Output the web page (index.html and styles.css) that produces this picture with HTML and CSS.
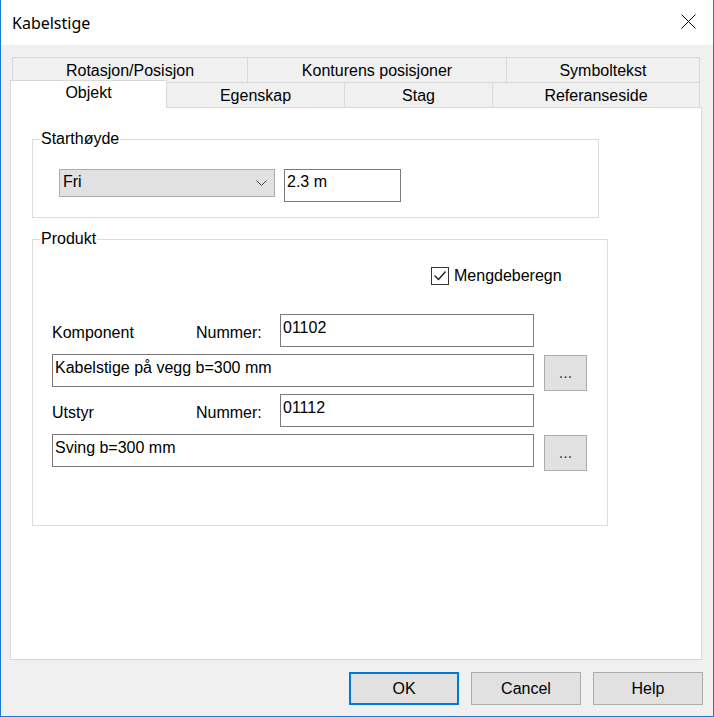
FILE: index.html
```html
<!DOCTYPE html>
<html lang="no">
<head>
<meta charset="utf-8">
<title>Kabelstige</title>
<link rel="stylesheet" href="styles.css">
</head>
<body>
<div class="window">
  <div class="titlebar">
    <span class="title">Kabelstige</span>
    <svg class="close" width="15" height="15" viewBox="0 0 15 15"><path d="M0.5 0.5 L14.5 14.5 M14.5 0.5 L0.5 14.5" stroke="#000" stroke-width="1" fill="none"/></svg>
  </div>
  <div class="client">
    <div class="tabs">
      <div class="tabrow row1">
        <div class="tab t-rot">Rotasjon/Posisjon</div>
        <div class="tab t-kon">Konturens posisjoner</div>
        <div class="tab t-sym last">Symboltekst</div>
      </div>
      <div class="tabrow row2">
        <div class="tab t-obj active">Objekt</div>
        <div class="tab t-egn">Egenskap</div>
        <div class="tab t-stag">Stag</div>
        <div class="tab t-ref last">Referanseside</div>
      </div>
    </div>
    <div class="panel">
      <fieldset class="group g-start">
        <legend>Starthøyde</legend>
        <div class="start-row">
          <div class="combo"><span>Fri</span><svg class="chev" width="11" height="6" viewBox="0 0 11 6"><polyline points="0.5,0.5 5.5,5.5 10.5,0.5" fill="none" stroke="#444" stroke-width="1"/></svg></div>
          <div class="field f-height">2.3 m</div>
        </div>
      </fieldset>
      <fieldset class="group g-prod">
        <legend>Produkt</legend>
        <div class="prod-body">
          <div class="check">
            <svg class="box" width="18" height="18" viewBox="0 0 18 18"><rect x="0.5" y="0.5" width="17" height="17" fill="#fff" stroke="#333" stroke-width="1"/><polyline points="3.5,8.5 7.5,12.5 14.5,4.5" fill="none" stroke="#1a1a1a" stroke-width="1.3"/></svg>
            <span>Mengdeberegn</span>
          </div>
          <div class="prod-grid">
            <span class="lbl">Komponent</span>
            <span class="lbl">Nummer:</span>
            <div class="field">01102</div>
            <div class="field long">Kabelstige på vegg b=300 mm</div>
            <div class="dots">...</div>
            <span class="lbl">Utstyr</span>
            <span class="lbl">Nummer:</span>
            <div class="field">01112</div>
            <div class="field long">Sving b=300 mm</div>
            <div class="dots">...</div>
          </div>
        </div>
      </fieldset>
    </div>
    <div class="buttons">
      <div class="push default">OK</div>
      <div class="push">Cancel</div>
      <div class="push">Help</div>
    </div>
  </div>
</div>
</body>
</html>
```
FILE: styles.css
```css
html, body {
  margin: 0;
  padding: 0;
  background: #f0f0f0;
}
body {
  font-family: "Liberation Sans", Arial, sans-serif;
  font-size: 16px;
  color: #000;
}
.window {
  width: 714px;
  height: 717px;
  box-sizing: border-box;
  border: 1px solid #1a7ad4;
  border-top: 0;
  background: #f0f0f0;
  display: flex;
  flex-direction: column;
}
.titlebar {
  height: 45px;
  flex: none;
  background: #fff;
  display: flex;
  justify-content: space-between;
  align-items: flex-start;
  padding: 0 17px 0 11px;
}
.title {
  font-family: "Noto Sans", sans-serif;
  font-size: 16px;
  line-height: 22px;
  margin-top: 12px;
}
.close {
  display: block;
  margin-top: 14px;
}
.client {
  flex: 1;
  padding: 12px 0 0 9px;
  display: flex;
  flex-direction: column;
}
.tabs {
  width: 692px;
}
.tabrow {
  display: flex;
  height: 25px;
}
.row1 {
  padding-left: 2px;
}
.row2 {
  align-items: flex-end;
}
.tab {
  box-sizing: border-box;
  height: 25px;
  border-top: 1px solid #d9d9d9;
  border-left: 1px solid #d9d9d9;
  background: #f0f0f0;
  text-align: center;
  line-height: 18px;
  padding-top: 4px;
  white-space: nowrap;
}
.tab.last {
  border-right: 1px solid #d9d9d9;
}
.t-rot { width: 235px; }
.t-kon { width: 259px; }
.t-sym { width: 194px; }
.t-obj { width: 157px; }
.t-egn { width: 177px; border-left: 0; }
.t-stag { width: 148px; }
.t-ref { width: 208px; }
.tab.active {
  height: 28px;
  margin-top: -2px;
  margin-bottom: -1px;
  border-right: 1px solid #d9d9d9;
  background: #fff;
  position: relative;
  z-index: 1;
  padding-top: 3px;
}
.panel {
  box-sizing: border-box;
  width: 692px;
  height: 553px;
  border: 1px solid #d9d9d9;
  background: #fff;
  padding: 22px 0 0 21px;
}
.group {
  margin: 0;
  border: 1px solid #dcdcdc;
  box-sizing: border-box;
  min-width: 0;
}
.group legend {
  padding: 0 1px;
  margin-left: 7px;
  line-height: 18px;
}
.g-start {
  width: 567px;
  padding: 21px 0 15px 0;
}
.start-row {
  display: flex;
  gap: 9px;
  align-items: flex-start;
  margin-left: 26px;
}
.combo {
  box-sizing: border-box;
  width: 216px;
  height: 28px;
  border: 1px solid #adadad;
  background: #e1e1e1;
  display: flex;
  justify-content: space-between;
  align-items: flex-start;
  padding: 3px 7px 0 3px;
  line-height: 18px;
}
.chev {
  display: block;
  margin-top: 7px;
}
.field {
  box-sizing: border-box;
  height: 33px;
  border: 1px solid #7a7a7a;
  background: #fff;
  padding: 4px 2px 0;
  line-height: 18px;
  white-space: nowrap;
}
.f-height {
  width: 117px;
  padding-top: 3px;
}
.g-prod {
  width: 576px;
  margin-top: 12px;
  padding: 19px 0 58px 0;
}
.prod-body {
  margin-left: 19px;
}
.check {
  display: flex;
  align-items: center;
  gap: 5px;
  margin-left: 379px;
  height: 18px;
  line-height: 18px;
}
.box {
  display: block;
}
.prod-grid {
  display: grid;
  grid-template-columns: 144px 84px 254px 10px 43px;
  grid-template-rows: repeat(4, 33px);
  row-gap: 7px;
  margin-top: 29px;
}
.lbl {
  align-self: start;
  padding-top: 10px;
  line-height: 18px;
}
.long {
  grid-column: 1 / 4;
}
.dots {
  grid-column: 5;
  align-self: start;
  box-sizing: border-box;
  height: 36px;
  margin-top: 1px;
  border: 1px solid #adadad;
  background: #e1e1e1;
  color: #444;
  display: flex;
  align-items: center;
  justify-content: center;
  line-height: 18px;
}
.buttons {
  display: flex;
  justify-content: flex-end;
  gap: 12px;
  margin-top: 12px;
  padding-right: 10px;
}
.push {
  box-sizing: border-box;
  width: 110px;
  height: 33px;
  border: 1px solid #adadad;
  background: #e1e1e1;
  display: flex;
  align-items: center;
  justify-content: center;
  line-height: 18px;
}
.push.default {
  border: 2px solid #0078d7;
}
```
